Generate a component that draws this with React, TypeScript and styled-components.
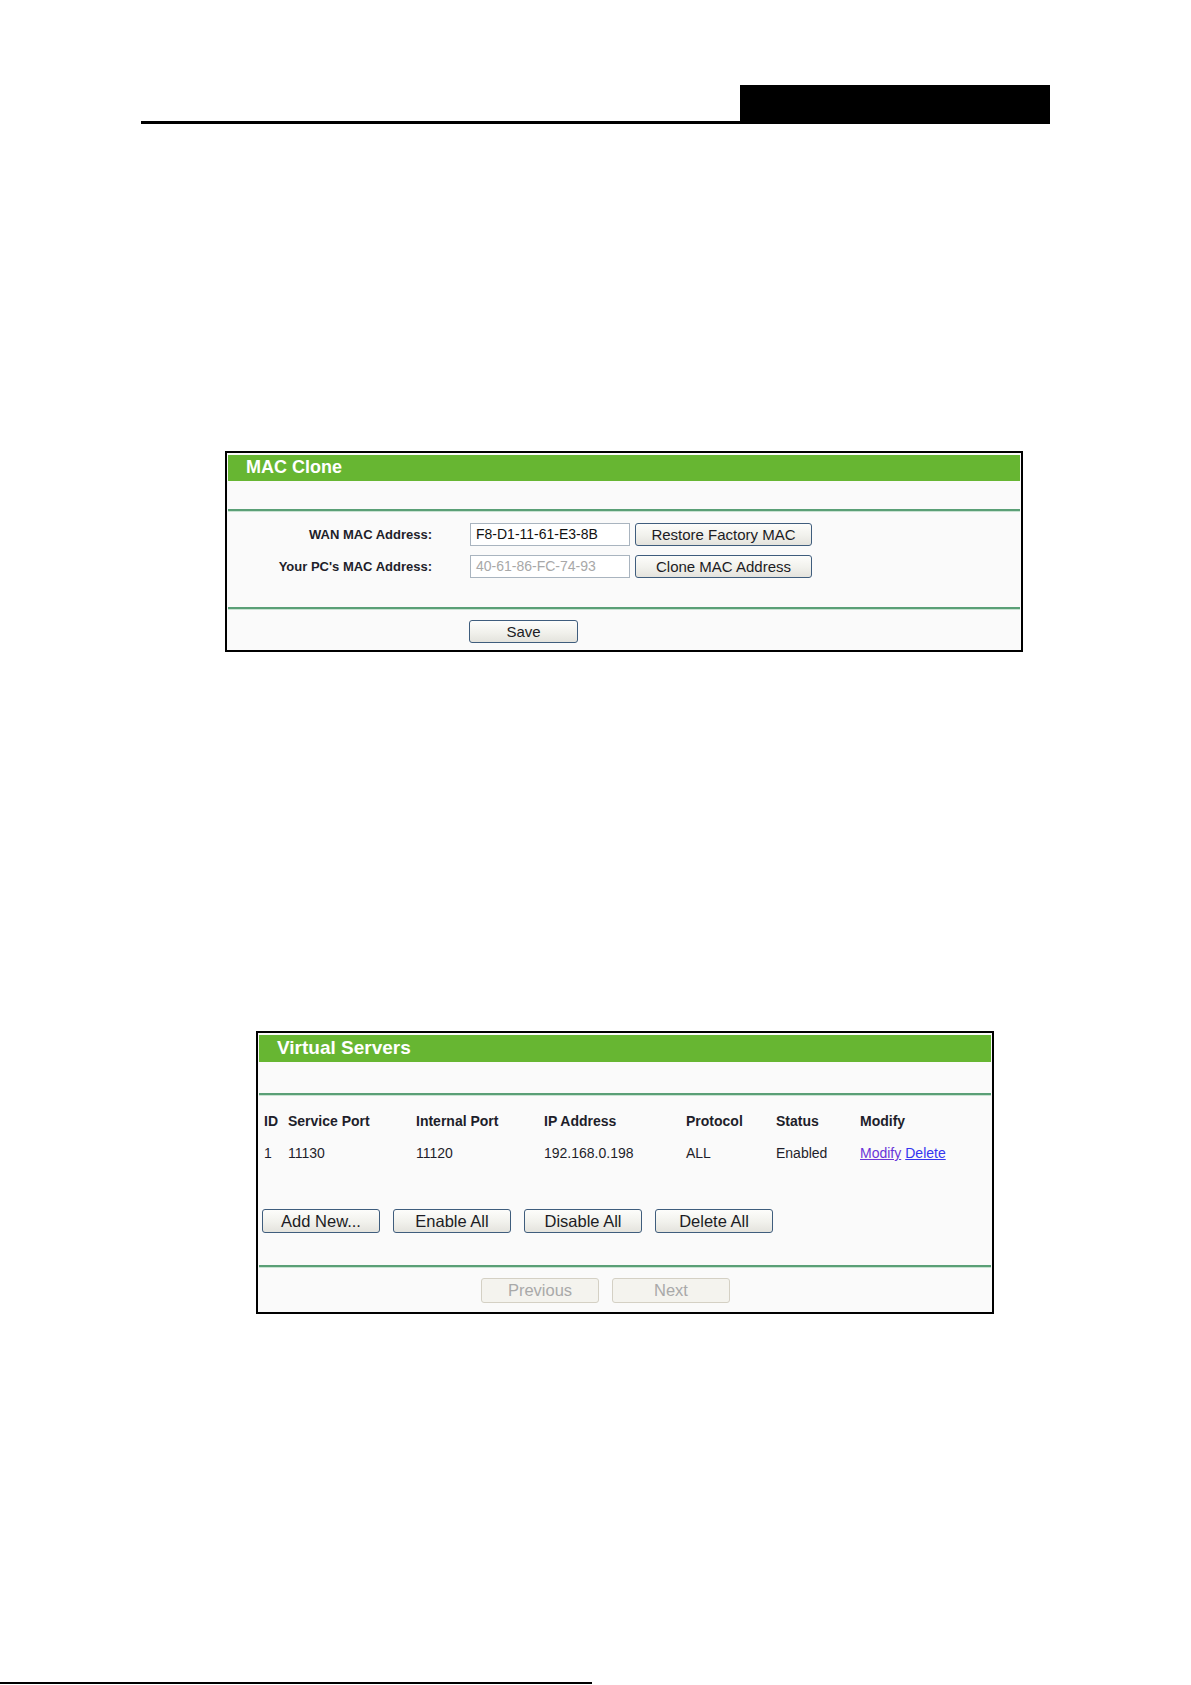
import React from 'react'
import styled, { createGlobalStyle } from 'styled-components'

const GlobalStyle = createGlobalStyle`
  html, body {
    margin: 0;
    padding: 0;
    background: #ffffff;
  }
  body {
    font-family: 'Liberation Sans', Arial, sans-serif;
    color: #222;
  }
`

const COLORS = {
  green: '#67b632',
  rule: '#5a9f76',
  panelBg: '#fafafa',
  text: '#1e1e2a',
  btnBorder: '#3f5d7d',
  link: '#3535f0',
  visited: '#6a35d8',
}

const Page = styled.div`
  position: relative;
  width: 1191px;
  height: 1685px;
  padding-top: 85px;
  box-sizing: border-box;
`

const HeaderBar = styled.div`
  display: flex;
  align-items: flex-end;
  margin-left: 141px;
  width: 909px;
`

const HeaderRule = styled.div`
  flex: 1;
  height: 3px;
  background: #000;
`

const HeaderBlock = styled.div`
  width: 310px;
  height: 39px;
  background: #000;
`

const Panel = styled.div<{ left: number; width: number; top: number }>`
  margin-left: ${({ left }) => left}px;
  margin-top: ${({ top }) => top}px;
  width: ${({ width }) => width}px;
  border: 2px solid #000;
  padding: 2px 1px 0;
  box-sizing: border-box;
  background: ${COLORS.panelBg};
`

const PanelTitle = styled.div<{ size: number; height: number; indent: number }>`
  height: ${({ height }) => height}px;
  background: ${COLORS.green};
  color: #fff;
  font-weight: 700;
  font-size: ${({ size }) => size}px;
  line-height: ${({ height }) => height - 2}px;
  padding-left: ${({ indent }) => indent}px;
`

const Spacer = styled.div<{ h: number }>`
  height: ${({ h }) => h}px;
`

const Rule = styled.div`
  height: 2px;
  background: ${COLORS.rule};
  box-shadow: 0 1px 0 #c9e2d2;
`

const FormRow = styled.div`
  display: flex;
  align-items: center;
  height: 23px;
  margin-bottom: 9px;
`

const Label = styled.div`
  width: 204px;
  text-align: right;
  font-size: 13px;
  font-weight: 700;
  color: ${COLORS.text};
  margin-right: 38px;
`

const TextInput = styled.div<{ dim?: boolean }>`
  width: 160px;
  height: 23px;
  box-sizing: border-box;
  border: 1px solid #a9b4bf;
  background: #fff;
  font-size: 14px;
  line-height: 21px;
  padding-left: 5px;
  color: ${({ dim }) => (dim ? '#a8a8a8' : '#111')};
  margin-right: 5px;
`

const Button = styled.button<{ w: number; h?: number; size?: number; disabled?: boolean }>`
  width: ${({ w }) => w}px;
  height: ${({ h }) => h || 23}px;
  box-sizing: border-box;
  border: 1px solid ${({ disabled }) => (disabled ? '#d4d0c4' : COLORS.btnBorder)};
  border-radius: 3px;
  background: ${({ disabled }) =>
    disabled ? '#f4f3ee' : 'linear-gradient(#fdfdfb, #f1f1ec 55%, #e4e3dd)'};
  font-family: 'Liberation Sans', Arial, sans-serif;
  font-size: ${({ size }) => size || 15}px;
  color: ${({ disabled }) => (disabled ? '#a9a9a9' : '#1c1c24')};
  padding: 0;
  line-height: 1;
`

const SaveRow = styled.div`
  padding: 11px 0 7px 241px;
  display: flex;
`

const Table = styled.table`
  border-collapse: collapse;
  margin-left: 5px;
  font-size: 14px;
  color: ${COLORS.text};
  td, th {
    padding: 0;
    text-align: left;
    white-space: nowrap;
  }
  th {
    font-weight: 700;
    height: 32px;
  }
  td {
    height: 32px;
  }
`

const Link = styled.a<{ visited?: boolean }>`
  color: ${({ visited }) => (visited ? COLORS.visited : COLORS.link)};
  text-decoration: underline;
  margin-right: 4px;
`

const ButtonBar = styled.div<{ pad: number }>`
  display: flex;
  gap: 13px;
  padding-left: ${({ pad }) => pad}px;
`

const Footer = styled.div`
  position: absolute;
  left: 0;
  top: 1682px;
  width: 592px;
  height: 2px;
  background: #000;
`

const columns = [24, 128, 128, 142, 90, 84, 120]

const App = () => {
  return (
    <Page>
      <GlobalStyle />
      <HeaderBar>
        <HeaderRule />
        <HeaderBlock />
      </HeaderBar>

      <Panel left={225} width={798} top={327}>
        <PanelTitle size={18} height={26} indent={18}>
          MAC Clone
        </PanelTitle>
        <Spacer h={28} />
        <Rule />
        <Spacer h={12} />
        <FormRow>
          <Label>WAN MAC Address:</Label>
          <TextInput>F8-D1-11-61-E3-8B</TextInput>
          <Button w={177}>Restore Factory MAC</Button>
        </FormRow>
        <FormRow>
          <Label>Your PC's MAC Address:</Label>
          <TextInput dim>40-61-86-FC-74-93</TextInput>
          <Button w={177}>Clone MAC Address</Button>
        </FormRow>
        <Spacer h={20} />
        <Rule />
        <SaveRow>
          <Button w={109} h={23}>
            Save
          </Button>
        </SaveRow>
      </Panel>

      <Panel left={256} width={738} top={379}>
        <PanelTitle size={19} height={27} indent={18}>
          Virtual Servers
        </PanelTitle>
        <Spacer h={31} />
        <Rule />
        <Spacer h={10} />
        <Table>
          <colgroup>
            {columns.map((w, i) => (
              <col key={i} style={{ width: w }} />
            ))}
          </colgroup>
          <thead>
            <tr>
              <th>ID</th>
              <th>Service Port</th>
              <th>Internal Port</th>
              <th>IP Address</th>
              <th>Protocol</th>
              <th>Status</th>
              <th>Modify</th>
            </tr>
          </thead>
          <tbody>
            <tr>
              <td>1</td>
              <td>11130</td>
              <td>11120</td>
              <td>192.168.0.198</td>
              <td>ALL</td>
              <td>Enabled</td>
              <td>
                <Link visited href="#">Modify</Link>
                <Link href="#">Delete</Link>
              </td>
            </tr>
          </tbody>
        </Table>
        <Spacer h={40} />
        <ButtonBar pad={3}>
          <Button w={118} h={24} size={16.5}>Add New...</Button>
          <Button w={118} h={24} size={16.5}>Enable All</Button>
          <Button w={118} h={24} size={16.5}>Disable All</Button>
          <Button w={118} h={24} size={16.5}>Delete All</Button>
        </ButtonBar>
        <Spacer h={32} />
        <Rule />
        <Spacer h={11} />
        <ButtonBar pad={222}>
          <Button w={118} h={25} size={16.5} disabled>Previous</Button>
          <Button w={118} h={25} size={16.5} disabled>Next</Button>
        </ButtonBar>
        <Spacer h={9} />
      </Panel>

      <Footer />
    </Page>
  )
}

export default App
